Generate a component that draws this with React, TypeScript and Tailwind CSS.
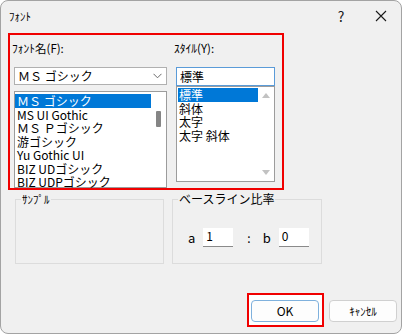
const fontItems = [
  'ＭＳ ゴシック',
  'MS UI Gothic',
  'ＭＳ Ｐゴシック',
  '游ゴシック',
  'Yu Gothic UI',
  'BIZ UDゴシック',
  'BIZ UDPゴシック',
]

const styleItems = ['標準', '斜体', '太字', '太字 斜体']

const Chevron = () => (
  <svg width="9" height="6" viewBox="0 0 9 6" fill="none">
    <path d="M0.5 0.8 L4.5 4.8 L8.5 0.8" stroke="#6a6a6a" strokeWidth="1" />
  </svg>
)

const CloseIcon = () => (
  <svg width="12" height="12" viewBox="0 0 12 12" fill="none">
    <path d="M1 1 L11 11 M11 1 L1 11" stroke="#1a1a1a" strokeWidth="1.1" />
  </svg>
)

const Arrow = ({ up }: { up?: boolean }) => (
  <svg width="8" height="5" viewBox="0 0 8 5">
    <path d={up ? 'M0 5 L4 0 L8 5 Z' : 'M0 0 L4 5 L8 0 Z'} fill="#c2c2c2" />
  </svg>
)

export default function App() {
  return (
    <div className="w-[404px] h-[336px] bg-white font-['Noto_Sans_CJK_JP',sans-serif] text-[12px] text-black">
      <div className="w-[402px] h-[334px] border border-[#a3a3a3] rounded-[8px] bg-[#f0f0f0] overflow-hidden flex flex-col">
        {/* title bar */}
        <div className="h-[29px] flex items-center shrink-0">
          <span className="pl-[8px] text-[11px] leading-[14px]">ﾌｫﾝﾄ</span>
          <div className="ml-auto flex">
            <span className="w-[40px] flex justify-center text-[14px] leading-[16px] text-[#1a1a1a]">?</span>
            <span className="w-[40px] flex justify-center items-center"><CloseIcon /></span>
          </div>
        </div>

        {/* font / style selection */}
        <div className="ml-[7px] mt-[3px] w-[276px] h-[157px] border-2 border-[#f00000] overflow-hidden flex shrink-0">
          <div className="pl-[2px] pt-[6px] flex flex-col">
            <div className="leading-[14px] text-[11.5px]">ﾌｫﾝﾄ名(F):</div>
            <div className="ml-[2px] mt-[12px] w-[153px] h-[19px] bg-white border border-[#b0b0b0] flex items-center pl-[3px] pr-[4px] leading-[14px]">
              <span>ＭＳ ゴシック</span>
              <span className="ml-auto"><Chevron /></span>
            </div>
            <div className="ml-[2px] mt-[6px] w-[153px] h-[97px] bg-white border border-[#9c9c9c] flex shrink-0">
              <div className="flex-1 pt-[2px]">
                {fontItems.map((f, i) => (
                  <div
                    key={f}
                    className={
                      i === 0
                        ? 'h-[13.5px] leading-[13.5px] pl-[2px] bg-[#0078d7] text-white whitespace-nowrap'
                        : 'h-[13.5px] leading-[13.5px] pl-[2px] whitespace-nowrap'
                    }
                  >
                    {f}
                  </div>
                ))}
              </div>
              <div className="w-[15px] flex justify-center pt-[19px]">
                <div className="w-[5px] h-[16px] bg-[#858585] rounded-[1px]" />
              </div>
            </div>
          </div>

          <div className="ml-[7px] pt-[6px] flex flex-col">
            <div className="leading-[14px] text-[11.5px]">ｽﾀｲﾙ(Y):</div>
            <div className="ml-[2px] mt-[12px] w-[99px] h-[19px] bg-white border border-[#5a9bd8] flex items-center pl-[3px] leading-[14px]">
              標準
            </div>
            <div className="ml-[2px] w-[99px] h-[96px] bg-white border border-[#9c9c9c] flex">
              <div className="flex-1 pt-[1px] pl-[1px]">
                {styleItems.map((s, i) => (
                  <div
                    key={s}
                    className={
                      i === 0
                        ? 'h-[13.5px] leading-[13.5px] pl-[1px] bg-[#0078d7] text-white'
                        : 'h-[13.5px] leading-[13.5px] pl-[1px]'
                    }
                  >
                    {s}
                  </div>
                ))}
              </div>
              <div className="w-[16px] flex flex-col items-center justify-between pt-[6px] pb-[6px]">
                <Arrow up />
                <Arrow />
              </div>
            </div>
          </div>
        </div>

        {/* sample / baseline */}
        <div className="flex mt-[2px] ml-[14px] shrink-0">
          <fieldset className="w-[149px] h-[72px] border border-[#dcdcdc] pl-[5px]">
            <legend className="px-[1px] leading-[14px] text-[11px]">ｻﾝﾌﾟﾙ</legend>
          </fieldset>
          <fieldset className="ml-[8px] w-[150px] h-[72px] border border-[#dcdcdc] pl-[5px]">
            <legend className="px-[1px] leading-[14px] text-[12px]">ベースライン比率</legend>
            <div className="mt-[22px] flex items-center">
              <span className="ml-[10px] text-[13px] leading-[16px]">a</span>
              <div className="ml-[8px] w-[30px] h-[19px] bg-white border-b border-[#8a8a8a] pl-[3px] leading-[16px]">1</div>
              <span className="ml-[14px] leading-[16px]">:</span>
              <span className="ml-[12px] text-[13px] leading-[16px]">b</span>
              <div className="ml-[8px] w-[30px] h-[19px] bg-white border-b border-[#8a8a8a] pl-[3px] leading-[16px]">0</div>
            </div>
          </fieldset>
        </div>

        {/* buttons */}
        <div className="mt-[29px] flex justify-end items-start pr-[4px]">
          <div className="border-2 border-[#f00000] bg-white pt-[5px] pb-[3px] pl-[2px] pr-[3px]">
            <button className="w-[68px] h-[22px] rounded-[4px] bg-[#fdfdfd] border border-[#7fb1dd] text-[12px] leading-[14px]">
              OK
            </button>
          </div>
          <button className="ml-[5px] mt-[7px] w-[68px] h-[22px] rounded-[4px] bg-[#fdfdfd] border border-[#d0d0d0] text-[11px] leading-[14px]">
            ｷｬﾝｾﾙ
          </button>
        </div>
      </div>
    </div>
  )
}
